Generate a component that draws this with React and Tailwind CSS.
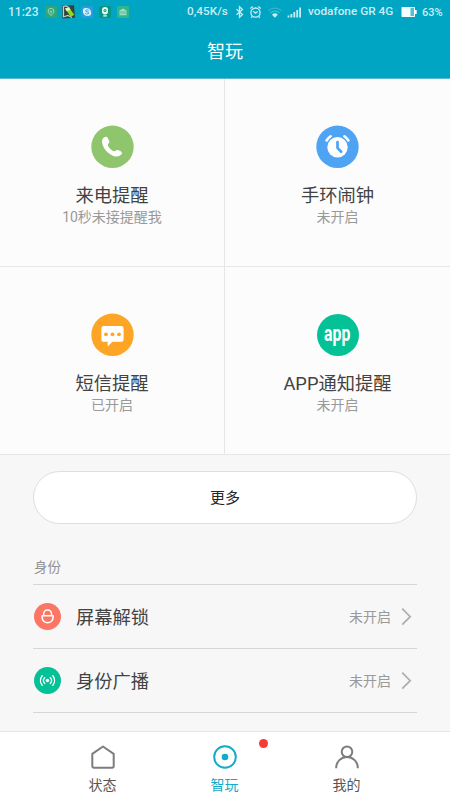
import React, { useState } from "react";
import clsx from "clsx";

const PhoneIcon = () => (
  <svg viewBox="0 0 43 43" className="w-[43px] h-[43px]">
    <circle cx="21.5" cy="21.8" r="21.2" fill="#8fc66d" />
    <path
      d="M12.900 12.400c1.500-1 3-.7 3.900.8l1.200 2.200c.6 1.200.4 2.200-.5 3-.9.900-.9 1.700-.4 2.700 1.100 2.100 2.800 3.800 4.900 4.900 1 .5 1.700.300 2.500-.3.900-.7 1.800-.8 2.900-.4l2.300.9c1.400.7 1.700 2.100.6 3.400-1.900 2.200-5.200 2.600-8.400 1.100-4.800-2.200-8.600-6.300-10.300-11-1.100-3.100-.7-5.800 1.300-7.300z"
      fill="#fff"
    />
  </svg>
);

const ClockIcon = () => (
  <svg viewBox="0 0 43 43" className="w-[43px] h-[43px]">
    <circle cx="21.5" cy="21.8" r="21.2" fill="#4fa3f3" />
    <circle cx="21.5" cy="22.3" r="10.2" fill="#fff" />
    <g fill="none" strokeLinecap="round" strokeLinejoin="round">
      <path d="M10.600 15.500a14 14 0 0 1 4-4.200M32.400 15.500a14 14 0 0 0-4-4.200" stroke="#fff" strokeWidth="2.600" />
      <path d="M21.500 17v5.900l3.700 3.800" stroke="#4fa3f3" strokeWidth="2.700" />
    </g>
  </svg>
);

const MessageIcon = () => (
  <svg viewBox="0 0 43 43" className="w-[43px] h-[43px]">
    <circle cx="21.5" cy="21.8" r="21.2" fill="#ffa526" />
    <path
      d="M13 13h17a2.600 2.600 0 0 1 2.600 2.600v10.600a2.600 2.600 0 0 1-2.600 2.600h-8.600l-4.700 4.700v-4.700H13a2.600 2.600 0 0 1-2.600-2.600V15.600A2.600 2.600 0 0 1 13 13z"
      fill="#fff"
    />
    <g fill="#ffa526">
      <circle cx="15" cy="21.300" r="1.900" />
      <circle cx="21.500" cy="21.300" r="1.900" />
      <circle cx="28" cy="21.300" r="1.900" />
    </g>
  </svg>
);

const AppIcon = () => (
  <div className="w-[43px] h-[43px] p-[0.5px]">
    <div className="w-full h-full rounded-full bg-[#05c296] flex items-center justify-center">
      <span className="text-white text-[22px] leading-none font-bold font-['Roboto',sans-serif] scale-x-72 -mt-[2px]">
        app
      </span>
    </div>
  </div>
);

const LockIcon = () => (
  <svg viewBox="0 0 27 27" className="w-[27px] h-[27px]">
    <circle cx="13.5" cy="13.5" r="13.5" fill="#fb7664" />
    <g fill="none" stroke="#fff" strokeWidth="1.5">
      <path d="M8.100 12.700h11v1.600a5.500 5.500 0 0 1-11 0z" strokeLinejoin="round" />
      <path d="M9.700 12.600v-1.800a3.900 3.900 0 0 1 7.800 0v1.800" />
    </g>
  </svg>
);

const BroadcastIcon = () => (
  <svg viewBox="0 0 27 27" className="w-[27px] h-[27px]">
    <circle cx="13.5" cy="13.5" r="13.5" fill="#05c296" />
    <circle cx="13.5" cy="13.5" r="1.7" fill="#fff" />
    <g fill="none" stroke="#fff" strokeWidth="1.4" strokeLinecap="round">
      <path d="M10.700 10.600a4.300 4.300 0 0 0 0 5.800M16.300 10.600a4.300 4.300 0 0 1 0 5.800" />
      <path d="M8.200 8.800a7.400 7.400 0 0 0 0 9.400M18.800 8.800a7.400 7.400 0 0 1 0 9.400" />
    </g>
  </svg>
);

const HomeIcon = () => (
  <svg viewBox="0 0 26 26" className="w-[26px] h-[26px]" fill="none" stroke="currentColor" strokeWidth="2">
    <path d="M2.300 9.800 13 2.500l10.700 7.300v12.300a1.600 1.600 0 0 1-1.600 1.600H3.900a1.600 1.600 0 0 1-1.600-1.600z" strokeLinejoin="round" />
  </svg>
);

const PlayIcon = () => (
  <svg viewBox="0 0 26 26" className="w-[26px] h-[26px]" fill="none" stroke="currentColor" strokeWidth="2">
    <circle cx="13" cy="13" r="10.8" />
    <circle cx="13" cy="13" r="3.3" fill="currentColor" stroke="none" />
  </svg>
);

const UserIcon = () => (
  <svg viewBox="0 0 26 26" className="w-[26px] h-[26px]" fill="none" stroke="currentColor" strokeWidth="2">
    <circle cx="13" cy="7.7" r="5.3" />
    <path d="M2.200 24.200v-.4a10.800 10.800 0 0 1 21.600 0v.4" />
  </svg>
);

const features = [
  { title: "来电提醒", status: "10秒未接提醒我", icon: PhoneIcon },
  { title: "手环闹钟", status: "未开启", icon: ClockIcon },
  { title: "短信提醒", status: "已开启", icon: MessageIcon },
  { title: "APP通知提醒", status: "未开启", icon: AppIcon },
];

const identities = [
  { title: "屏幕解锁", status: "未开启", icon: LockIcon },
  { title: "身份广播", status: "未开启", icon: BroadcastIcon },
];

const tabs = [
  { name: "状态", icon: HomeIcon },
  { name: "智玩", icon: PlayIcon, unread: true },
  { name: "我的", icon: UserIcon },
];

const NotificationIcons = () => (
  <svg viewBox="0 0 86 14" className="w-[86px] h-[14px] ml-[6px] -mt-px">
    <rect x="1" y="1" width="12" height="12" rx="1" fill="#2fa678" />
    <path d="M7 3.200 9.700 4.500v3.200L7 10.500 4.300 7.700V4.500z" fill="none" stroke="#a9dec1" strokeWidth=".9" />
    <path d="M7 5.300v3M5.800 6.800h2.400" stroke="#a9dec1" strokeWidth=".8" />

    <path d="M18.300.500 30 .2l1 12.600-12.500.7z" fill="#34433c" />
    <path d="m18.800 1.500 3.500-.5 3 2M19 12l5-1.500 4 2M19.500 2v10" stroke="#c5cbd0" strokeWidth="1.200" fill="none" />
    <path d="m21 3.500 4-1 5.300 7.300-3.500 2z" fill="#8ddc20" />
    <path d="m21 3.500 4-1 1.600 2.200-3.800 1.600z" fill="#e5f5cf" />

    <rect x="37" y="1" width="12" height="12" rx="1" fill="#279ce2" />
    <rect x="38.9" y="3" width="5.5" height="5.5" rx="2.5" fill="#d9effa" />
    <rect x="41.6" y="5.3" width="5.5" height="5.5" rx="2.5" fill="#d9effa" />
    <circle cx="43" cy="7" r="3.7" fill="#d9effa" />
    <path d="M44.700 5.500c-1-1-3.400-.7-3.200.4.200 1.100 3.200.7 3.300 2 0 1.200-2.500 1.400-3.500.4" fill="none" stroke="#279ce2" strokeWidth="1" />

    <rect x="55" y="1" width="12" height="12" rx="1" fill="#079884" />
    <rect x="58" y="2" width="6" height="7.500" rx="3" fill="#e7f7f3" />
    <circle cx="61" cy="5.500" r="1.500" fill="#079884" />
    <circle cx="61" cy="5.500" r=".6" fill="#e7f7f3" />
    <path d="M59.200 10.900h3.600" stroke="#e7f7f3" strokeWidth="1.300" />

    <rect x="73" y="1" width="12" height="12" rx="1" fill="#2fb58b" />
    <path d="m75.500 5.500 3.500-2 3.500 2v4.700h-7z" fill="#9fdec5" />
    <path d="M77 6v3M79 6v3M81 6v3" stroke="#2fb58b" strokeWidth=".7" />
  </svg>
);

const StatusBar = () => (
  <div className="flex items-center h-6 pl-2 text-[11.8px] font-medium leading-none text-[#c9edf4] font-['Roboto',sans-serif]">
    <span className="w-[30px] whitespace-nowrap text-[12px]">11:23</span>
    <NotificationIcons />
    <span className="ml-[57px] w-[42px] whitespace-nowrap">0,45K/s</span>
    <svg viewBox="0 0 74 14" className="w-[74px] h-[14px] ml-[5px] -mt-px" fill="none" stroke="currentColor">
      <path d="m2.500 4.200 6 5.300-3 2.800V1.700l3 2.800-6 5.300" strokeWidth="1.300" />
      <circle cx="21.500" cy="7.600" r="4.600" strokeWidth="1.300" />
      <path d="m19.300 6.200 2.200 2 2.300-1.800M16.300 3.600l2.500-2M26.700 3.600l-2.500-2M18.300 11.500l-1.100 1.200M24.700 11.500l1.100 1.200" strokeWidth="1.300" />
      <path d="M34.300 5.700a9.500 9.500 0 0 1 13.200 0" strokeWidth="1.200" opacity=".25" />
      <path d="M36.300 7.900a6.700 6.700 0 0 1 9.200 0" strokeWidth="1.200" opacity=".35" />
      <path d="M38 9.700a4.200 4.200 0 0 1 5.800 0l-2.900 3z" fill="currentColor" stroke="none" />
      <path d="M54.500 10.500v2M57.400 9v3.500M60.300 7v5.500M63.200 5v7.500M66.100 2.500v10" strokeWidth="1.800" />
    </svg>
    <span className="w-[86px] whitespace-nowrap">vodafone GR 4G</span>
    <svg viewBox="0 0 17 12" className="w-[17px] h-[12px] ml-[7px] -mt-px">
      <rect x=".5" y="1" width="13.500" height="10" rx=".7" fill="#f7fdff" />
      <rect x="9.500" y="2" width="3.500" height="8" fill="#53bdd1" />
      <rect x="14" y="4" width="1.700" height="4" fill="#f7fdff" />
    </svg>
    <span className="ml-[4px] whitespace-nowrap text-[11px]">63%</span>
  </div>
);

const App = () => {
  const [activeTab, setActiveTab] = useState("智玩");

  return (
    <div className="w-[450px] h-[800px] flex flex-col overflow-hidden bg-[#f7f7f7] text-[#424242] font-['Roboto','Noto_Sans_CJK_SC',sans-serif]">
      <header className="h-[79px] shrink-0 bg-[#00a5c3] border-b border-[#5ab9cc]">
        <StatusBar />
        <h1 className="h-[54px] pt-[2px] flex items-center justify-center text-[18px] leading-none text-white">
          智玩
        </h1>
      </header>

      <div className="grid grid-cols-[225px_225px] shrink-0">
        {features.map(({ title, status, icon: Icon }, i) => (
          <button
            key={title}
            className={clsx(
              "h-[188px] pt-[46px] flex flex-col items-center bg-[#fcfcfc] border-b border-[#e6e6e6]",
              i % 2 === 0 && "border-r"
            )}
          >
            <Icon />
            <span className="mt-[16px] text-[18.3px] leading-6">{title}</span>
            <span className="text-[14px] leading-[18px] text-[#999]">{status}</span>
          </button>
        ))}
      </div>

      <main className="flex-1 px-[33px] pt-4">
        <button className="w-full h-[53px] pt-[2px] rounded-full bg-white border border-[#dedede] text-[15px] text-[#262626]">
          更多
        </button>
        <h2 className="mt-[32px] h-[29px] pt-px text-[13.6px] leading-5 text-[#929292] pl-px border-b border-[#d6d6d6]">
          身份
        </h2>
        {identities.map(({ title, status, icon: Icon }) => (
          <div
            key={title}
            className="h-16 flex items-center border-b border-[#d6d6d6] pl-px pr-[5px]"
          >
            <Icon />
            <span className="ml-[15px] pt-[2px] flex-1 text-[18.3px]">{title}</span>
            <span className="pt-[2px] text-[14px] text-[#999]">{status}</span>
            <svg viewBox="0 0 11 18" className="w-[11px] h-[18px] ml-[10px]" fill="none" stroke="#b0b0b0" strokeWidth="1.8">
              <path d="m1.200.700 8 8-8 8" />
            </svg>
          </div>
        ))}
      </main>

      <nav className="h-[69px] shrink-0 flex justify-center bg-white border-t border-[#e6e6e6] pr-px">
        {tabs.map(({ name, icon: Icon, unread }) => (
          <button
            key={name}
            onClick={() => setActiveTab(name)}
            className={clsx(
              "relative w-[122px] pt-[12px] flex flex-col items-center",
              activeTab === name ? "text-[#12abc8]" : "text-[#7d7d7d]"
            )}
          >
            <Icon />
            <span
              className={clsx(
                "mt-[5px] text-[14px] leading-5",
                activeTab !== name && "text-[#565656]"
              )}
            >
              {name}
            </span>
            {unread && (
              <span className="absolute top-[7px] left-[95px] w-[9px] h-[9px] rounded-full bg-[#f83a34]" />
            )}
          </button>
        ))}
      </nav>
    </div>
  );
};

export default App;
